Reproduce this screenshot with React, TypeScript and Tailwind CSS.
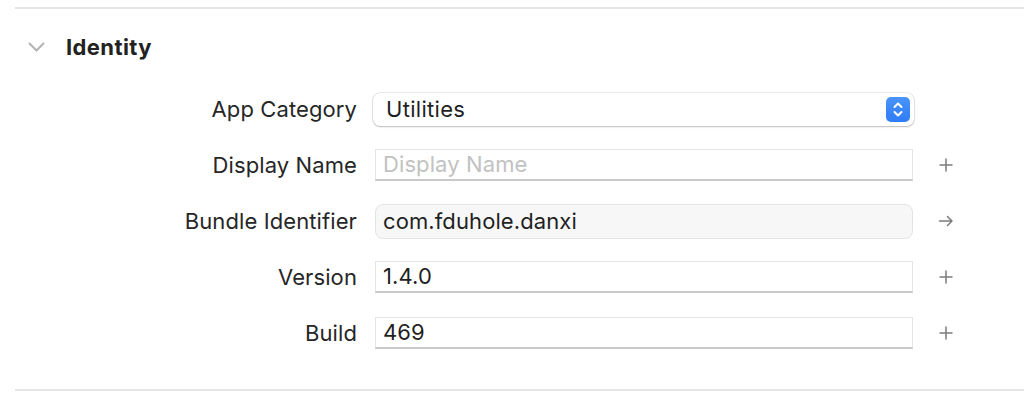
import React from "react";

const Plus = () => (
  <svg width="14" height="14" viewBox="0 0 14 14" fill="none">
    <path d="M7 1v12M1 7h12" stroke="#7b7b7b" strokeWidth="1.5" strokeLinecap="round" />
  </svg>
);

const Arrow = () => (
  <svg width="16" height="14" viewBox="0 0 16 14" fill="none">
    <path d="M1.5 7h12.5M9.5 2.5L14 7l-4.5 4.5" stroke="#7b7b7b" strokeWidth="1.5" strokeLinecap="round" strokeLinejoin="round" />
  </svg>
);

function Row({ label, children, icon }: { label: string; children: React.ReactNode; icon?: React.ReactNode }) {
  return (
    <div className="flex h-[56px] items-center">
      <div className="w-[357px] text-right text-[22px] tracking-[0.1px] text-[#262626]">{label}</div>
      <div className="ml-[16px] w-[541px] flex items-center">{children}</div>
      <div className="ml-[24px] w-[16px] flex items-center justify-center">{icon}</div>
    </div>
  );
}

const TextField = ({ value, placeholder }: { value?: string; placeholder?: string }) => (
  <div className="ml-[2px] h-[32px] w-[538px] bg-white border border-[#e4e4e4] border-b-2 border-b-[#c9c9c9] flex items-center px-[7px] text-[22px] tracking-[0.1px]">
    {value ? <span className="text-[#1f1f1f]">{value}</span> : <span className="text-[#c2c2c2]">{placeholder}</span>}
  </div>
);

export default function App() {
  return (
    <div className="w-[1024px] h-[400px] bg-white pt-[7px]" style={{ fontFamily: "Inter, 'Liberation Sans', sans-serif" }}>
      <div className="ml-[15px] h-[2px] bg-[#e5e5e5]" />
      <div className="h-[72px] pt-1 flex items-center">
        <div className="ml-[28px] w-[17px] flex items-center">
          <svg width="17" height="10" viewBox="0 0 17 10" fill="none">
            <path d="M1.5 1.5l7 7 7-7" stroke="#b3b3b3" strokeWidth="2" strokeLinecap="round" strokeLinejoin="round" />
          </svg>
        </div>
        <div className="ml-[21px] text-[22px] tracking-[0.4px] font-bold text-[#222]">Identity</div>
      </div>
      <div>
        <Row label="App Category">
          <div className="h-[33px] w-[541px] rounded-[7px] bg-white flex items-center justify-between pl-[13px] pr-[4px] text-[22px] tracking-[0.3px] text-[#1f1f1f] shadow-[0_0_0_0.5px_rgba(0,0,0,0.15),0_1px_2px_rgba(0,0,0,0.2)]">
            <span>Utilities</span>
            <div className="w-[24px] h-[25px] rounded-[5px] bg-gradient-to-b from-[#4a94fa] to-[#2f7cf5] flex items-center justify-center">
              <svg width="10" height="17" viewBox="0 0 10 17" fill="none">
                <path d="M1.5 6L5 2.5 8.5 6M1.5 11L5 14.5 8.5 11" stroke="white" strokeWidth="2" strokeLinecap="round" strokeLinejoin="round" />
              </svg>
            </div>
          </div>
        </Row>
        <Row label="Display Name" icon={<Plus />}>
          <TextField placeholder="Display Name" />
        </Row>
        <Row label="Bundle Identifier" icon={<Arrow />}>
          <div className="ml-[2px] h-[35px] w-[538px] rounded-[8px] bg-[#f7f7f7] border border-[#e3e3e3] flex items-center px-[7px] text-[22px] tracking-[0.1px] text-[#1f1f1f]">
            com.fduhole.danxi
          </div>
        </Row>
        <Row label="Version" icon={<Plus />}>
          <TextField value="1.4.0" />
        </Row>
        <Row label="Build" icon={<Plus />}>
          <TextField value="469" />
        </Row>
      </div>
      <div className="mt-[28px] ml-[15px] h-[2px] bg-[#e5e5e5]" />
    </div>
  );
}
